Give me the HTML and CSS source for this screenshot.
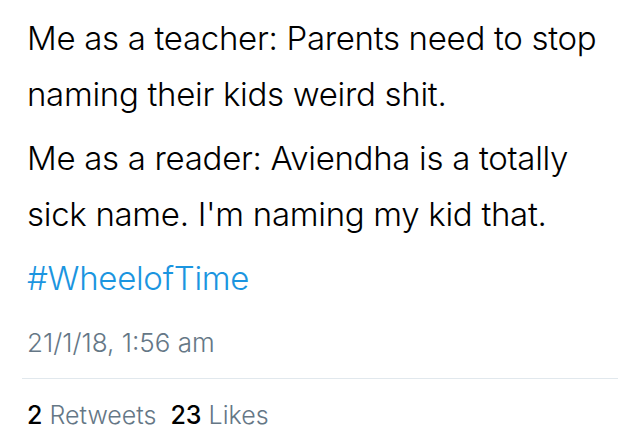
FILE: index.html
```html
<!DOCTYPE html>
<html>
<head>
<meta charset="utf-8">
<link rel="stylesheet" href="styles.css">
</head>
<body>
<div class="tweet">
  <div class="body">
    <p class="para">Me as a teacher: Parents need to stop naming their kids weird shit.</p>
    <p class="para">Me as a reader: Aviendha is a totally sick name. I'm naming my kid that.</p>
    <p class="para tag"><a class="hashtag">#WheelofTime</a></p>
    <div class="date">21/1/18, 1:56 am</div>
  </div>
  <div class="stats">
    <span class="stat"><b class="num">2</b> Retweets</span>
    <span class="stat"><b class="num">23</b> Likes</span>
  </div>
</div>
</body>
</html>
```
FILE: styles.css
```css
html, body {
  margin: 0;
  padding: 0;
  background: #ffffff;
}
body {
  font-family: "Inter", "Roboto", "Liberation Sans", sans-serif;
  color: #000000;
  width: 640px;
  height: 448px;
  overflow: hidden;
}
.tweet {
  margin: 0 22px;
}
.body {
  padding: 10px 0 0 5px;
  border-bottom: 1px solid #e1e8ed;
}
.para {
  margin: 0 0 8px 0;
  font-size: 33px;
  line-height: 56px;
  font-weight: 300;
  letter-spacing: -0.3px;
}
.hashtag {
  color: #1b95e0;
  text-decoration: none;
}
.date {
  font-size: 26px;
  line-height: 30px;
  font-weight: 300;
  color: #657786;
  padding: 14px 0 20px;
}
.stats {
  padding: 21px 0 0 5px;
  font-size: 25px;
  line-height: 30px;
  font-weight: 300;
  color: #657786;
  display: flex;
  gap: 14px;
}
.num {
  color: #000000;
  font-weight: 500;
}
```
